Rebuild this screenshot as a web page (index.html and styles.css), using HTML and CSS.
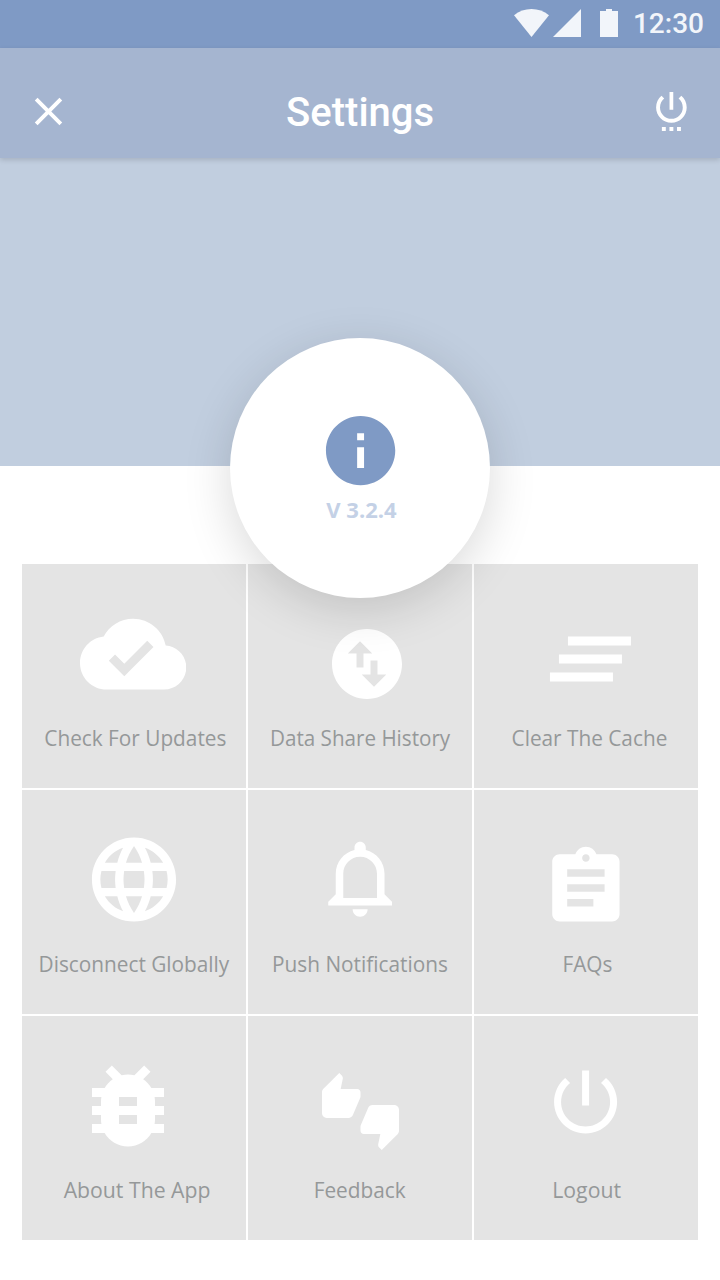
FILE: index.html
```html
<!DOCTYPE html>
<html lang="en">
<head>
<meta charset="utf-8">
<title>Settings</title>
<link rel="stylesheet" href="styles.css">
</head>
<body>
<div class="screen">
  <div class="status-bar">
    <svg class="status-icons" width="106" height="28" viewBox="0 0 106 28">
      <path d="M0 6.2C5 2.2 11 0 17.5 0S30 2.2 35 6.2L17.5 28z"/>
      <path d="M39 28L67 0v28z"/>
      <path d="M86 2h6V0h6v2h6v26H86z"/>
    </svg>
    <span class="clock">12:30</span>
  </div>
  <header class="app-bar">
    <svg class="close" viewBox="0 0 24 24"><path d="M19 6.41L17.59 5 12 10.59 6.41 5 5 6.41 10.59 12 5 17.59 6.41 19 12 13.41 17.59 19 19 17.59 13.41 12z"/></svg>
    <h1 class="title">Settings</h1>
    <svg class="power" viewBox="0 0 24 27"><path d="M13.1 3h-2.2v10.4h2.2V3zm4.73 2.17l-1.6 1.6C17.7 7.96 18.7 9.81 18.7 12c0 3.7-3 6.7-6.7 6.7s-6.7-3-6.7-6.7c0-2.19 1-4.04 2.47-5.23L6.17 5.17C4.23 6.82 3 9.26 3 12c0 4.97 4.03 9 9 9s9-4.03 9-9c0-2.74-1.23-5.18-3.17-6.83zM6.4 23.6h2.3v2.3H6.4zM10.85 23.6h2.3v2.3h-2.3zM15.3 23.6h2.3v2.3h-2.3z"/></svg>
  </header>
  <div class="hero">
    <div class="version">
      <svg class="info" viewBox="0 0 24 24"><path d="M12 2C6.48 2 2 6.48 2 12s4.48 10 10 10 10-4.48 10-10S17.52 2 12 2zm1 15h-2v-6h2v6zm0-8h-2V7h2v2z"/></svg>
      <span class="version-text">V 3.2.4</span>
    </div>
  </div>
  <main class="grid">
    <div class="tile updates">
      <div class="icon-area"><svg class="icon" viewBox="0 0 24 24"><path d="M19.35 10.04C18.67 6.59 15.64 4 12 4 9.11 4 6.6 5.64 5.35 8.04 2.34 8.36 0 10.91 0 14c0 3.31 2.69 6 6 6h13c2.76 0 5-2.24 5-5 0-2.64-2.05-4.78-4.65-4.96zM10 17l-3.5-3.5 1.41-1.41L10 14.17 15.18 9l1.41 1.41L10 17z"/></svg></div>
      <span class="label">Check For Updates</span>
    </div>
    <div class="tile history">
      <div class="icon-area"><svg class="icon" viewBox="0 0 24 24"><path d="M12 2C6.48 2 2 6.48 2 12s4.48 10 10 10 10-4.48 10-10S17.52 2 12 2zM6.5 9L10 5.5 13.5 9H11v4H9V9H6.5zm11 6L14 18.5 10.5 15H13v-4h2v4h2.5z"/></svg></div>
      <span class="label">Data Share History</span>
    </div>
    <div class="tile cache">
      <div class="icon-area"><svg class="icon" viewBox=".12 0 24 24"><path d="M5 13h14v-2H5v2zm-2 4h14v-2H3v2zM7 7v2h14V7H7z"/></svg></div>
      <span class="label">Clear The Cache</span>
    </div>
    <div class="tile disconnect">
      <div class="icon-area"><svg class="icon" viewBox="-.12 0 24 24"><path d="M11.99 2C6.47 2 2 6.48 2 12s4.47 10 9.99 10C17.52 22 22 17.52 22 12S17.52 2 11.99 2zm6.93 6h-2.95c-.32-1.25-.78-2.45-1.38-3.56 1.84.63 3.37 1.91 4.33 3.56zM12 4.04c.83 1.2 1.48 2.53 1.91 3.96h-3.82c.43-1.43 1.08-2.76 1.91-3.96zM4.26 14C4.1 13.36 4 12.69 4 12s.1-1.36.26-2h3.38c-.08.66-.14 1.32-.14 2 0 .68.06 1.34.14 2H4.26zm.82 2h2.95c.32 1.25.78 2.45 1.38 3.56-1.84-.63-3.37-1.9-4.33-3.56zm2.95-8H5.08c.96-1.66 2.49-2.93 4.33-3.56C8.81 5.55 8.35 6.75 8.03 8zM12 19.96c-.83-1.2-1.48-2.53-1.91-3.96h3.82c-.43 1.43-1.08 2.76-1.91 3.96zM14.34 14H9.66c-.09-.66-.16-1.32-.16-2 0-.68.07-1.35.16-2h4.68c.09.65.16 1.32.16 2 0 .68-.07 1.34-.16 2zm.25 5.56c.6-1.11 1.06-2.31 1.38-3.56h2.95c-.96 1.65-2.49 2.93-4.33 3.56zM16.36 14c.08-.66.14-1.32.14-2 0-.68-.06-1.34-.14-2h3.38c.16.64.26 1.31.26 2s-.1 1.36-.26 2h-3.38z"/></svg></div>
      <span class="label">Disconnect Globally</span>
    </div>
    <div class="tile notifications">
      <div class="icon-area"><svg class="icon" viewBox="0 0 24 24"><path d="M11.5 22c1.1 0 2-.9 2-2h-4c0 1.1.9 2 2 2zm6.5-6v-5.5c0-3.07-2.13-5.64-5-6.32V3.5c0-.83-.67-1.5-1.5-1.5S10 2.67 10 3.5v.68c-2.87.68-5 3.25-5 6.32V16l-2 2v1h17v-1l-2-2zm-2 1H7v-6.5C7 8.01 9.01 6 11.5 6S16 8.01 16 10.5V17z"/></svg></div>
      <span class="label">Push Notifications</span>
    </div>
    <div class="tile faqs">
      <div class="icon-area"><svg class="icon" viewBox="0 0 24 24"><path d="M19 3h-4.18C14.4 1.84 13.3 1 12 1c-1.3 0-2.4.84-2.82 2H5c-1.1 0-2 .9-2 2v14c0 1.1.9 2 2 2h14c1.1 0 2-.9 2-2V5c0-1.1-.9-2-2-2zm-7 0c.55 0 1 .45 1 1s-.45 1-1 1-1-.45-1-1 .45-1 1-1zm2 14H7v-2h7v2zm3-4H7v-2h10v2zm0-4H7V7h10v2z"/></svg></div>
      <span class="label">FAQs</span>
    </div>
    <div class="tile about">
      <div class="icon-area"><svg class="icon" viewBox="0 0 24 24"><path d="M20 8h-2.81c-.45-.78-1.07-1.45-1.82-1.96L17 4.41 15.59 3l-2.17 2.17C12.96 5.06 12.49 5 12 5c-.49 0-.96.06-1.41.17L8.41 3 7 4.41l1.62 1.63C7.88 6.55 7.26 7.22 6.81 8H4v2h2.09c-.05.33-.09.66-.09 1v1H4v2h2v1c0 .34.04.67.09 1H4v2h2.81c1.04 1.79 2.97 3 5.19 3s4.15-1.21 5.19-3H20v-2h-2.09c.05-.33.09-.66.09-1v-1h2v-2h-2v-1c0-.34-.04-.67-.09-1H20V8zm-6 8h-4v-2h4v2zm0-4h-4v-2h4v2z"/></svg></div>
      <span class="label">About The App</span>
    </div>
    <div class="tile feedback">
      <div class="icon-area"><svg class="icon" viewBox="0 0 24 24"><path d="M12 6c0-.55-.45-1-1-1H5.82l.66-3.18.02-.23c0-.31-.13-.59-.33-.8L5.38 0 .44 4.94C.17 5.21 0 5.59 0 6v6.5c0 .83.67 1.5 1.5 1.5h6.75c.62 0 1.15-.38 1.38-.91l2.26-5.29c.07-.17.11-.36.11-.55V6zm10.5 4h-6.75c-.62 0-1.15.38-1.38.91l-2.26 5.29c-.07.17-.11.36-.11.55V18c0 .55.45 1 1 1h5.18l-.66 3.18-.02.24c0 .31.13.59.33.8l.79.78 4.94-4.94c.27-.27.44-.65.44-1.06v-6.5c0-.83-.67-1.5-1.5-1.5z"/></svg></div>
      <span class="label">Feedback</span>
    </div>
    <div class="tile logout">
      <div class="icon-area"><svg class="icon" viewBox=".12 0 24 24"><path d="M13 3h-2v10h2V3zm4.83 2.17l-1.42 1.42C17.99 7.86 19 9.81 19 12c0 3.87-3.13 7-7 7s-7-3.13-7-7c0-2.19 1.01-4.14 2.58-5.42L6.17 5.17C4.23 6.82 3 9.26 3 12c0 4.97 4.03 9 9 9s9-4.03 9-9c0-2.74-1.23-5.18-3.17-6.83z"/></svg></div>
      <span class="label">Logout</span>
    </div>
  </main>
</div>
</body>
</html>
```
FILE: styles.css
```css
* { box-sizing: border-box; }
body { margin: 0; background: #fff; }
.screen { width: 720px; height: 1280px; overflow: hidden; background: #fff; }
svg { display: block; flex: none; fill: #fff; }

.status-bar {
  display: flex;
  justify-content: flex-end;
  height: 48px;
  padding: 9px 16px 0 0;
  background: #7f9ac5;
}
.status-bar .status-icons { width: 106px; height: 28px; margin-right: 13px; fill: #f2f5fa; }
.clock {
  padding-top: 1px;
  font: 500 28px/28px Roboto, sans-serif;
  color: #f2f5fa;
}

.app-bar {
  position: relative;
  z-index: 1;
  display: flex;
  justify-content: space-between;
  height: 110px;
  padding: 0 28px 0 25px;
  background: #a5b5d0;
  box-shadow: 0 2px 5px rgba(0, 0, 0, .14);
}
.close { width: 47px; height: 47px; margin-top: 40px; }
.title {
  margin: 41px 0 0 -3px;
  font: 500 40px/48px Roboto, sans-serif;
  color: #fff;
}
.power { width: 40.8px; height: 45.9px; margin-top: 38.9px; }

.hero {
  display: flex;
  justify-content: center;
  height: 308px;
  padding-top: 180px;
  background: #c1cedf;
}
.version {
  position: relative;
  z-index: 2;
  display: flex;
  flex: none;
  flex-direction: column;
  align-items: center;
  width: 260px;
  height: 260px;
  padding-top: 71px;
  border-radius: 50%;
  background: #fff;
  box-shadow: 0 12px 48px rgba(0, 0, 0, .15);
}
.version .info { width: 83.2px; height: 83.2px; margin-left: 1.4px; fill: #7f9ac5; }
.version-text {
  margin: 2px 0 0 3px;
  font: 700 22px/30px "Open Sans", "Noto Sans", sans-serif;
  color: #c4d1e6;
}

.grid {
  display: grid;
  grid-template-columns: repeat(3, 224px);
  grid-auto-rows: 224px;
  gap: 2px;
  margin: 98px 22px 0;
}
.tile { display: flex; flex-direction: column; align-items: center; background: #e4e4e4; }
.icon-area { display: flow-root; width: 100%; height: 158px; }
.label {
  font: 400 22px/30px "Open Sans", "Noto Sans", sans-serif;
  white-space: nowrap;
  color: #959899;
  transform: scaleX(.945);
}

.updates .icon { width: 106.3px; height: 106.3px; margin: 37px 0 0 58px; }
.history .icon { width: 84px; height: 84px; margin: 58px 0 0 77px; }
.cache .icon { width: 108px; height: 108px; margin: 41px 0 0 63px; }
.disconnect .icon { width: 101px; height: 101px; margin: 39px 0 0 61px; }
.notifications .icon { width: 90px; height: 90.6px; margin: 44px 0 0 69px; }
.faqs .icon { width: 89.8px; height: 89.8px; margin: 53px 0 0 66.8px; }
.about .icon { width: 108px; height: 108px; margin: 36px 0 0 52px; }
.feedback .icon { width: 77px; height: 77px; margin: 57px 0 0 74px; }
.logout .icon { width: 84px; height: 84px; margin: 43.5px 0 0 70px; }

.updates .label { margin-left: 2px; }
.history .label { transform: scaleX(.938); }
.cache .label { margin-left: 7px; }
.faqs .label { margin-left: 2px; }
.about .label { margin-left: 7px; transform: scaleX(.965); }
.logout .label { margin-left: 2px; transform: scaleX(.965); }
```
